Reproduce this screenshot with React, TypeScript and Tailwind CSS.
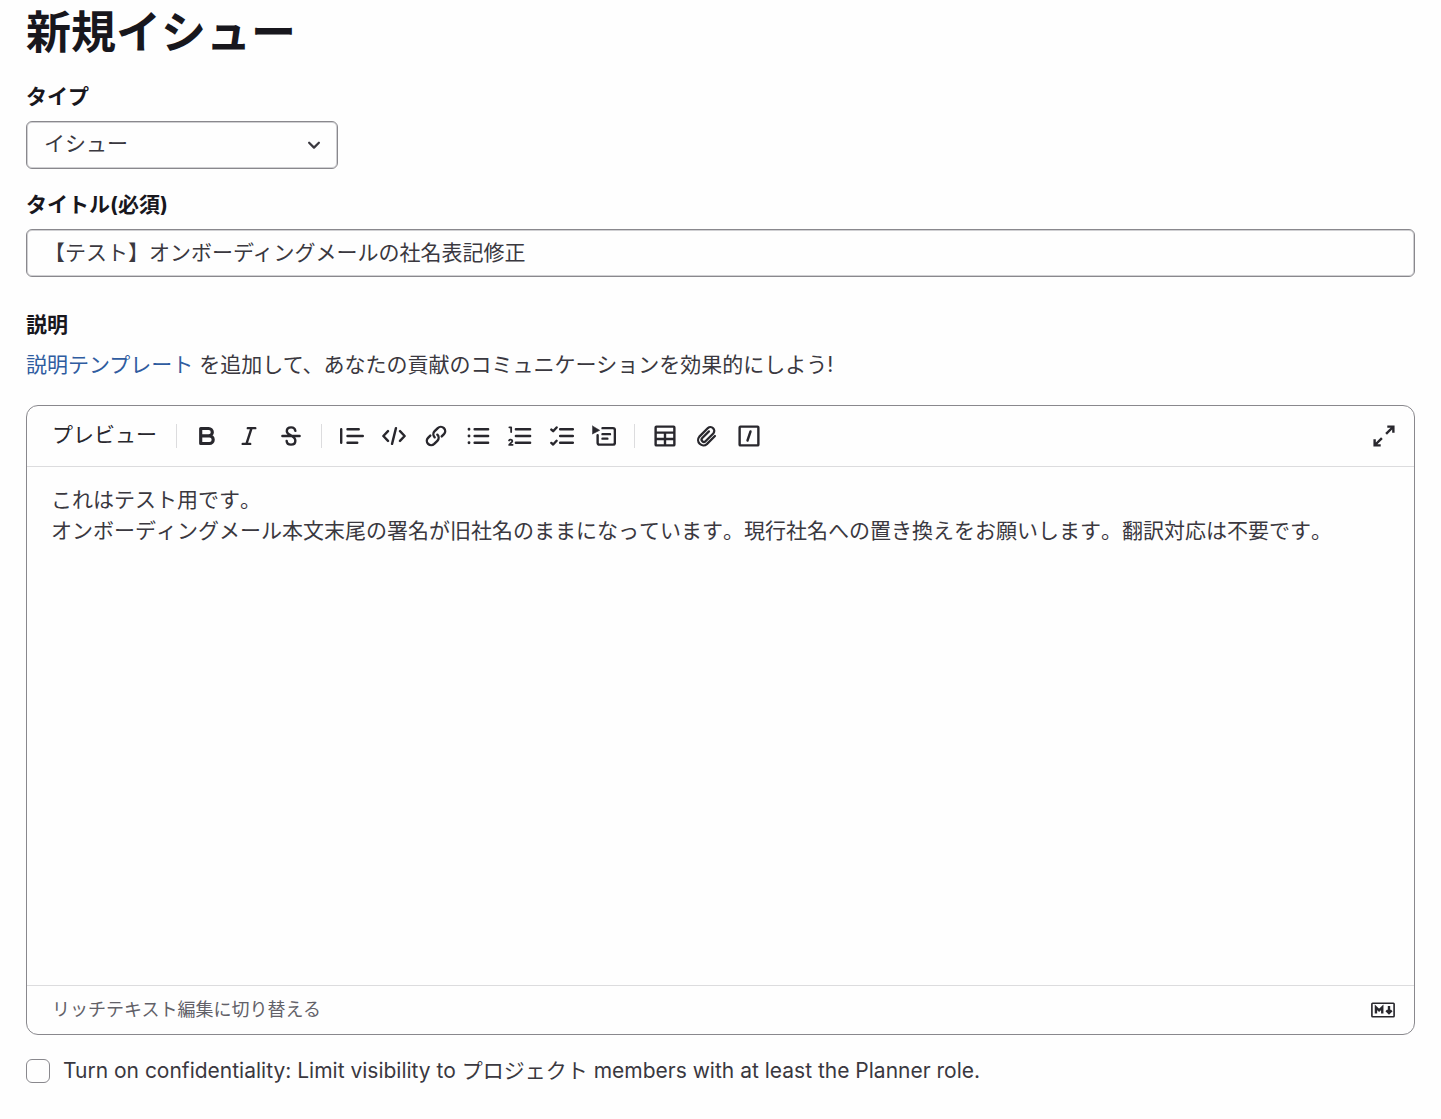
import { useState, type ReactNode } from "react";

function Icon({ children }: { children: ReactNode }) {
  return (
    <svg
      viewBox="0 0 16 16"
      className="size-6 shrink-0"
      fill="none"
      stroke="currentColor"
      strokeWidth="1.6"
      strokeLinecap="round"
      strokeLinejoin="round"
      aria-hidden="true"
    >
      {children}
    </svg>
  );
}

type Tool = { label: string; icon: ReactNode };

const textTools: Tool[] = [
  {
    label: "太字",
    icon: (
      <path
        d="M3.8 3h5.3a2.4 2.4 0 0 1 0 4.9H3.8zM3.8 7.9h5.8a2.55 2.55 0 0 1 0 5.1H3.8z"
        strokeWidth="2.1"
      />
    ),
  },
  { label: "斜体", icon: <path d="M7.2 2.75h5M3.8 13.25h5M9.7 2.75l-3.4 10.5" /> },
  {
    label: "取り消し線",
    icon: (
      <path d="M2.25 8h11.5M10.9 4.6C10.7 3.2 9.6 2.25 8.1 2.25c-1.7 0-2.9 1-2.9 2.5C5.2 7.5 10.9 7.7 10.9 11.1c0 1.6-1.2 2.65-2.9 2.65-1.6 0-2.8-1-2.9-2.5" />
    ),
  },
];

const blockTools: Tool[] = [
  {
    label: "引用",
    icon: <path d="M.8 3.5v9M5 3.5h7.5M5 8h10.2M5 12.5h6.5" />,
  },
  {
    label: "コード",
    icon: <path d="M4 4.75.9 8 4 11.25M12 4.75 15.1 8 12 11.25M9.3 2.75 6.7 13.25" />,
  },
  {
    label: "リンク",
    icon: (
      <>
        <path d="M7.1 8.9a2.9 2.9 0 0 1 0-4.1L9.2 2.7a2.9 2.9 0 0 1 4.1 4.1L11.8 8.3" />
        <path d="M8.9 7.1a2.9 2.9 0 0 1 0 4.1L6.8 13.3a2.9 2.9 0 0 1-4.1-4.1L4.2 7.7" />
      </>
    ),
  },
  {
    label: "箇条書き",
    icon: (
      <>
        <path d="M5.75 3.5h9M5.75 8h9M5.75 12.5h9" />
        <path d="M2 3.5h.01M2 8h.01M2 12.5h.01" strokeWidth="1.9" />
      </>
    ),
  },
  {
    label: "番号付きリスト",
    icon: (
      <>
        <path d="M5.25 3.5h9.5M5.25 8h9.5M5.25 12.5h9.5" />
        <path
          d="M.9 2.2h1.2v3.2M.7 11c.3-.8 2.2-.8 2.2.3 0 .8-1.4 1.4-2.1 2.6h2.3"
          strokeWidth="1.2"
        />
      </>
    ),
  },
  {
    label: "タスクリスト",
    icon: (
      <path d="M6.75 3.5h8.5M6.75 8h8.5M6.75 12.5h8.5M.9 3.7l1.2 1.1 2.3-2.5M.9 12.6l1.2 1.1 2.3-2.5" />
    ),
  },
  {
    label: "折りたたみセクション",
    icon: (
      <>
        <path d="M7 2.75h7c.7 0 1.25.5 1.25 1.25v8.5c0 .7-.5 1.25-1.25 1.25H5c-.7 0-1.25-.5-1.25-1.25V7.5M7 6.75h5M7 9.75h3.25" />
        <path d="M.3 1.3 5.1 4.2.3 6.6z" fill="currentColor" strokeWidth=".4" />
      </>
    ),
  },
];

const insertTools: Tool[] = [
  {
    label: "表",
    icon: (
      <path d="M2.25 1.75h11.5a.5.5 0 0 1 .5.5v11.5a.5.5 0 0 1-.5.5H2.25a.5.5 0 0 1-.5-.5V2.25a.5.5 0 0 1 .5-.5zM1.75 5.75h12.5M1.75 10h12.5M8 5.75v8.5" />
    ),
  },
  {
    label: "ファイルを添付",
    icon: (
      <path
        d="M13.3 8 7.9 13.4a3.55 3.55 0 0 1-5-5L8.6 2.7a2.55 2.55 0 0 1 3.6 3.6L7 11.5a1.5 1.5 0 0 1-2.15-2.15L9.3 4.9"
        strokeWidth="1.5"
      />
    ),
  },
  {
    label: "コードブロック",
    icon: (
      <path d="M2.25 1.75h11.5a.5.5 0 0 1 .5.5v11.5a.5.5 0 0 1-.5.5H2.25a.5.5 0 0 1-.5-.5V2.25a.5.5 0 0 1 .5-.5zM9 5l-2 6" />
    ),
  },
];

function ToolGroup({ tools }: { tools: Tool[] }) {
  return (
    <div className="flex gap-1.5">
      {tools.map((tool) => (
        <button
          key={tool.label}
          type="button"
          aria-label={tool.label}
          className="rounded p-1.5 text-[#28272d] hover:bg-gray-100"
        >
          <Icon>{tool.icon}</Icon>
        </button>
      ))}
    </div>
  );
}

function Divider() {
  return <span className="mx-3 h-6 w-px bg-[#dcdcde]" />;
}

export default function App() {
  const [title, setTitle] = useState("【テスト】オンボーディングメールの社名表記修正");
  const [description, setDescription] = useState(
    "これはテスト用です。\nオンボーディングメール本文末尾の署名が旧社名のままになっています。現行社名への置き換えをお願いします。翻訳対応は不要です。"
  );
  const [confidential, setConfidential] = useState(false);

  return (
    <main
      lang="ja"
      className="min-h-screen bg-[#fefefe] px-[26px] pt-[5px] pb-8 font-['Inter','Noto_Sans_CJK_JP',sans-serif] text-[21px] leading-8 text-[#3a383f]"
    >
      <h1 className="text-[45px] leading-[56px] font-bold text-[#18171d]">新規イシュー</h1>

      <form onSubmit={(e) => e.preventDefault()}>
        {/* Type */}
        <div className="mt-5">
          <label htmlFor="type" className="block font-bold text-[#18171d]">
            タイプ
          </label>
          <div className="relative mt-2 w-[312px]">
            <select
              id="type"
              className="block h-12 w-full appearance-none rounded-md border border-[#89888d] bg-transparent px-[17px] pb-0.5 shadow-[inset_0_0_0_1px_#d0d0d3]"
            >
              <option>イシュー</option>
            </select>
            <svg
              viewBox="0 0 16 16"
              className="pointer-events-none absolute top-3 right-3 size-6"
              fill="none"
              stroke="currentColor"
              strokeWidth="1.5"
              strokeLinecap="round"
              strokeLinejoin="round"
              aria-hidden="true"
            >
              <path d="M4.75 6.5 8 9.75l3.25-3.25" />
            </svg>
          </div>
        </div>

        {/* Title */}
        <div className="mt-5">
          <label htmlFor="title" className="block font-bold text-[#18171d]">
            タイトル(必須)
          </label>
          <input
            id="title"
            type="text"
            value={title}
            onChange={(e) => setTitle(e.target.value)}
            className="mt-2 block h-12 w-full rounded-md border border-[#89888d] bg-transparent px-[17px] pb-1 shadow-[inset_0_0_0_1px_#d0d0d3]"
          />
        </div>

        {/* Description */}
        <div className="mt-8">
          <label htmlFor="description" className="block font-bold text-[#18171d]">
            説明
          </label>
          <p className="mt-2">
            <a href="#templates" className="text-[#2f5ca0]">
              説明テンプレート
            </a>{" "}
            を追加して、あなたの貢献のコミュニケーションを効果的にしよう!
          </p>

          <div className="mt-6 rounded-xl border border-[#89888d]">
            <div className="flex h-[61px] items-center border-b border-[#dcdcde] pr-3 pl-[25px]">
              <button type="button" className="mr-[7px] pb-0.5 text-[#28272d]">
                プレビュー
              </button>
              <Divider />
              <ToolGroup tools={textTools} />
              <Divider />
              <ToolGroup tools={blockTools} />
              <Divider />
              <ToolGroup tools={insertTools} />
              <button
                type="button"
                aria-label="全画面表示"
                className="ml-auto rounded p-1.5 text-[#28272d] hover:bg-gray-100"
              >
                <Icon>
                  <path
                    d="M10.2 1.75h4.05V5.8M14 2 9.4 6.6M5.8 14.25H1.75V10.2M2 14l4.6-4.6"
                    strokeLinecap="butt"
                    strokeLinejoin="miter"
                  />
                </Icon>
              </button>
            </div>

            <textarea
              id="description"
              value={description}
              onChange={(e) => setDescription(e.target.value)}
              className="block h-[518px] w-full resize-none bg-transparent px-6 pt-[17px] leading-[31px] outline-none [font-kerning:none]"
            />

            <div className="flex h-[49px] items-center justify-between border-t border-[#dcdcde] pr-[19px] pl-[25px]">
              <button type="button" className="text-lg text-[#626168]">
                リッチテキスト編集に切り替える
              </button>
              <a href="#markdown" aria-label="Markdown" className="text-[#28272d]">
                <Icon>
                  <rect x=".6" y="3.5" width="14.8" height="9" rx=".5" strokeWidth="1.1" />
                  <path
                    d="M3.3 10.4V6.2l2.1 2 2.1-2v4.2M12 5.4v4.3M10.2 8.2l1.8 1.8 1.8-1.8"
                    strokeWidth="1.6"
                    strokeLinecap="butt"
                    strokeLinejoin="miter"
                  />
                </Icon>
              </a>
            </div>
          </div>
        </div>

        {/* Confidentiality */}
        <div className="mt-5 flex items-center gap-[13px]">
          <input
            id="confidential"
            type="checkbox"
            checked={confidential}
            onChange={(e) => setConfidential(e.target.checked)}
            className="size-6 shrink-0 appearance-none rounded-md border border-[#89888d] checked:bg-[#1f75cb]"
          />
          <label htmlFor="confidential">
            Turn on confidentiality: Limit visibility to プロジェクト members with at least the
            Planner role.
          </label>
        </div>
      </form>
    </main>
  );
}
